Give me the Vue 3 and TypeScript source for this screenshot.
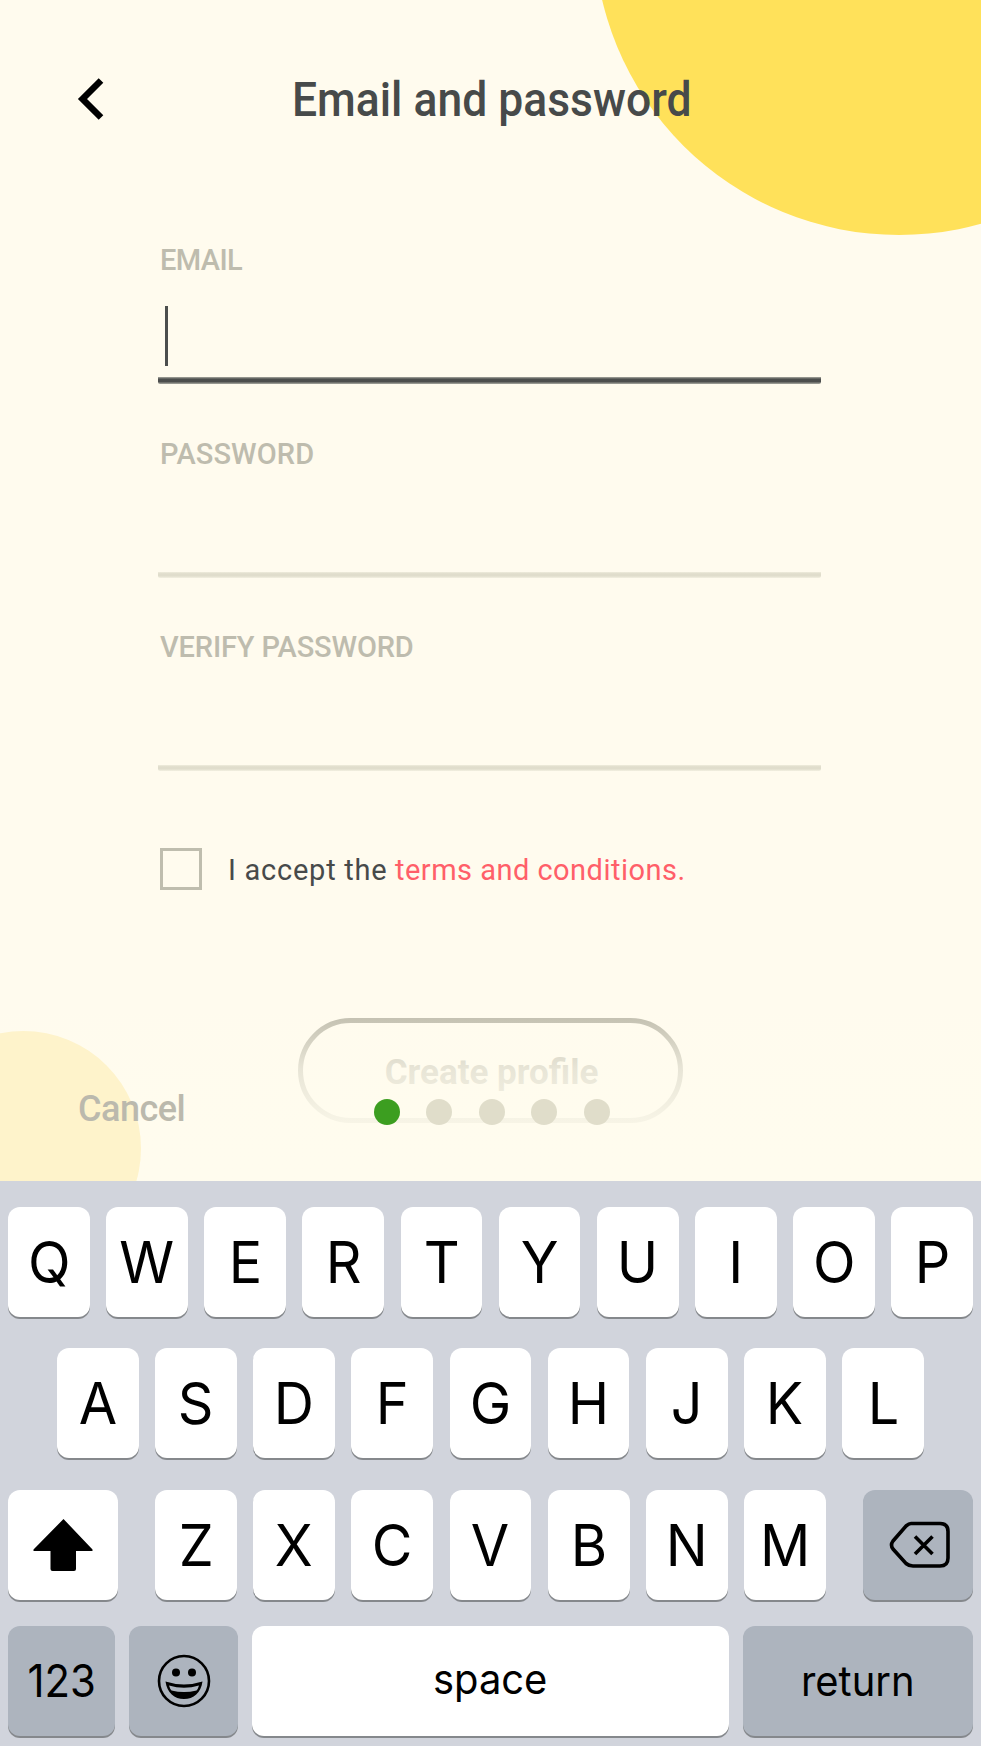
<script setup lang="ts">
interface Field {
  id: string
  label: string
  active: boolean
}

const fields: Field[] = [
  { id: 'email', label: 'EMAIL', active: true },
  { id: 'password', label: 'PASSWORD', active: false },
  { id: 'verify', label: 'VERIFY PASSWORD', active: false },
]

const steps = 5
const currentStep = 1

const topRow: string[] = [...'QWERTYUIOP']
const middleRow: string[] = [...'ASDFGHJKL']
const bottomRow: string[] = [...'ZXCVBNM']
</script>

<template>
  <div class="screen">
    <div class="sun"></div>

    <header class="header">
      <svg class="back" viewBox="0 0 30 44" width="30" height="44">
        <path d="M24 3.5 L5.5 22 L24 40.5" fill="none" stroke="#000" stroke-width="6.5" />
      </svg>
      <h1 class="title">Email and password</h1>
    </header>

    <main class="form">
      <div v-for="field in fields" :key="field.id" class="field" :class="{ active: field.active }">
        <span class="label" :class="field.id">{{ field.label }}</span>
        <div class="input"><i v-if="field.active" class="caret"></i></div>
      </div>

      <div class="terms">
        <span class="checkbox"></span>
        <p><span class="accept">I accept the</span><a class="link">terms and conditions.</a></p>
      </div>

      <button class="create"><span>Create profile</span></button>
    </main>

    <footer class="footer">
      <div class="moon"></div>
      <span class="cancel">Cancel</span>
      <div class="dots">
        <i v-for="n in steps" :key="n" class="dot" :class="{ on: n === currentStep }"></i>
      </div>
    </footer>

    <section class="keyboard">
      <div class="row top">
        <span v-for="k in topRow" :key="k" class="key"><b>{{ k }}</b></span>
      </div>
      <div class="row middle">
        <span v-for="k in middleRow" :key="k" class="key"><b>{{ k }}</b></span>
      </div>
      <div class="row bottom">
        <span class="key wide">
          <svg viewBox="0 0 60 52" width="60" height="52">
            <path d="M30.5 0 L59.5 30.5 V32 H43 V50 Q43 52 41 52 H19.500 Q17.500 52 17.500 50 V32 H.5 V30.5 Z" fill="#000" />
          </svg>
        </span>
        <div class="letters">
          <span v-for="k in bottomRow" :key="k" class="key"><b>{{ k }}</b></span>
        </div>
        <span class="key wide dark">
          <svg class="erase" viewBox="0 0 62 48" width="62" height="48">
            <path
              d="M22 2.500 H51 Q59 2.500 59 10.500 V37 Q59 45 51 45 H24 Q20 45 17 42.500 L4 28 Q1 24 4 20 L17 5 Q20 2.500 22 2.500 Z M26 15.500 L43.500 33 M43.500 15.500 L26 33"
              fill="none"
              stroke="#000"
              stroke-width="3.6"
            />
          </svg>
        </span>
      </div>
      <div class="row actions">
        <span class="key dark numbers"><b>123</b></span>
        <span class="key dark emoji">
          <svg viewBox="0 0 54 54" width="54" height="54">
            <circle cx="27" cy="27" r="25" fill="none" stroke="#000" stroke-width="2.6" />
            <circle cx="19" cy="18.5" r="4" />
            <circle cx="35" cy="18.5" r="4" />
            <path d="M8.500 27.500 Q27 33.500 45.500 27.500 C44 39 36.500 45 27 45 C17.500 45 10 39 8.500 27.500 Z" />
            <path d="M12 31.500 Q27 36 42 31.500 Q41 35 39.500 36.500 Q27 39.500 14.500 36.500 Q13 35 12 31.500 Z" fill="#adb4be" />
          </svg>
        </span>
        <span class="key space"><b>space</b></span>
        <span class="key dark return"><b>return</b></span>
      </div>
    </section>
  </div>
</template>

<style>
body {
  margin: 0;
  background: #fffbee;
}
</style>

<style scoped>
.screen {
  position: relative;
  display: flex;
  flex-direction: column;
  width: 981px;
  height: 1746px;
  overflow: hidden;
  background: #fffbee;
  color: #474a4a;
  font-family: Roboto, 'Liberation Sans', sans-serif;
}
.sun {
  position: absolute;
  left: 594px;
  top: -375px;
  width: 610px;
  height: 610px;
  border-radius: 50%;
  background: #ffe15a;
}
.header {
  position: relative;
  display: flex;
  align-items: center;
  box-sizing: border-box;
  height: 198px;
  padding-left: 77px;
}
.back {
  display: block;
}
.title {
  margin: 2px 0 0 185px;
  font-size: 48px;
  line-height: 60px;
  font-weight: 500;
  white-space: nowrap;
  transform: scaleX(0.926);
  transform-origin: left;
}
.form {
  display: flex;
  flex-direction: column;
  padding: 40px 160px 0 158px;
}
.field {
  display: flex;
  flex-direction: column;
  height: 193.7px;
}
.label {
  height: 40px;
  margin-left: 2px;
  color: #bebcae;
  font-size: 29px;
  font-weight: 500;
  line-height: 44px;
  white-space: nowrap;
}
.label.email {
  letter-spacing: -0.6px;
}
.label.password {
  letter-spacing: 0.1px;
}
.label.verify {
  letter-spacing: -0.15px;
}
.input {
  box-sizing: border-box;
  height: 106px;
  padding: 28px 0 0 7px;
  border-radius: 2px;
  background: linear-gradient(#efecdc, #e0ddcc 30%, #e0ddcc 65%, #f3f0e1) bottom / 100% 6px no-repeat;
}
.active .input {
  background: linear-gradient(#a9aaa1, #4c4e4d 30%, #4c4e4d 65%, #a9aaa1) bottom / 100% 7px no-repeat;
}
.caret {
  display: block;
  width: 2.5px;
  height: 60px;
  background: #4c4e4d;
}
.terms {
  display: flex;
  align-items: center;
  height: 42px;
  margin: 29px 0 0 2px;
}
.checkbox {
  box-sizing: border-box;
  width: 42px;
  height: 42px;
  border: 3px solid #bfbdae;
}
.terms p {
  display: flex;
  margin: 2px 0 0 26px;
  font-size: 29px;
  line-height: 42px;
  white-space: nowrap;
}
.accept {
  width: 167px;
  letter-spacing: 0.75px;
}
.link {
  color: #ff5f69;
  letter-spacing: 0.48px;
}
.create {
  display: flex;
  align-items: center;
  justify-content: center;
  box-sizing: border-box;
  width: 385px;
  height: 105px;
  margin: 128px 0 0 140px;
  padding: 3px 0 0 2px;
  border: 5.5px solid #b8b5a5;
  border-radius: 53px;
  background: transparent;
  color: #b8b5a5;
  font: 700 35px Roboto, sans-serif;
}
.footer {
  position: absolute;
  left: 0;
  top: 1000px;
  width: 981px;
  height: 181px;
  overflow: hidden;
  background: linear-gradient(rgba(255, 252, 238, 0), rgba(255, 252, 238, 0.68) 38%, rgba(255, 252, 238, 0.88) 65%, #fffcee);
}
.moon {
  position: absolute;
  left: -94px;
  top: 31px;
  width: 235px;
  height: 235px;
  border-radius: 50%;
  background: #fef3cb;
}
.cancel {
  position: absolute;
  left: 78px;
  top: 88px;
  color: #bbb9ad;
  font-size: 36px;
  font-weight: 500;
  line-height: 42px;
  letter-spacing: -0.5px;
}
.dots {
  position: absolute;
  left: 374px;
  top: 99px;
  display: flex;
  gap: 26.4px;
}
.dot {
  width: 26px;
  height: 26px;
  border-radius: 50%;
  background: #e0ddca;
}
.dot.on {
  background: #3c9e20;
}
.keyboard {
  position: absolute;
  left: 0;
  top: 1180.5px;
  display: flex;
  flex-direction: column;
  box-sizing: border-box;
  width: 981px;
  height: 566px;
  padding: 26.5px 8px 0;
  background: #d1d4dc;
  color: #000;
  font-family: Inter, 'Liberation Sans', sans-serif;
}
.row {
  display: flex;
  justify-content: space-between;
  height: 110px;
  margin-bottom: 31.3px;
}
.row.middle {
  padding: 0 49px;
}
.row.bottom {
  margin-bottom: 26px;
}
.letters {
  display: flex;
  gap: 16.5px;
}
.key {
  display: flex;
  align-items: center;
  justify-content: center;
  width: 81.7px;
  height: 110px;
  border-radius: 12px;
  background: #fff;
  box-shadow: 0 2px 0 #85888c;
  font-size: 58px;
  line-height: 1;
}
.key b {
  font-weight: 400;
  transform: scaleX(0.96);
}
.key.wide {
  width: 110px;
}
.key.dark {
  background: #adb4be;
}
.erase {
  margin-left: 4px;
}
.key.numbers {
  width: 107px;
  font-size: 45px;
}
.key.numbers b {
  transform: scaleX(0.93);
}
.key.emoji {
  width: 109px;
}
.key.space {
  box-sizing: border-box;
  width: 477px;
  padding-bottom: 3px;
  font-size: 42px;
}
.key.space b,
.key.return b {
  transform: scaleX(0.95);
}
.key.return {
  width: 230px;
  font-size: 42px;
}
</style>
